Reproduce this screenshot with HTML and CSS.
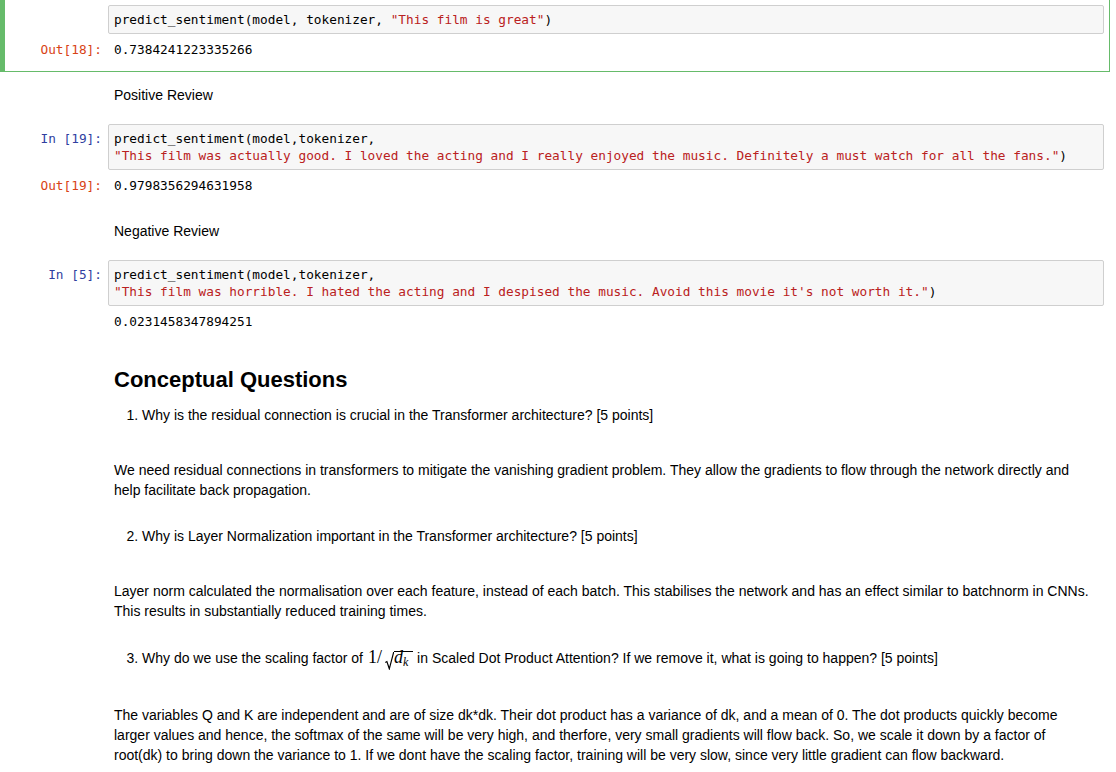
FILE: index.html
```html
<!DOCTYPE html>
<html>
<head>
<meta charset="utf-8">
<title>Notebook</title>
<link rel="stylesheet" href="styles.css">
</head>
<body>
<div class="notebook">

  <div class="cell code selected">
    <div class="row">
      <div class="prompt in"></div>
      <div class="input-area"><span class="cm-v">predict_sentiment(model, tokenizer, </span><span class="cm-s">"This film is great"</span><span class="cm-v">)</span></div>
    </div>
    <div class="row">
      <div class="prompt out">Out[18]:</div>
      <div class="output-text">0.7384241223335266</div>
    </div>
  </div>

  <div class="cell text">
    <div class="row">
      <div class="prompt"></div>
      <div class="rendered"><p>Positive Review</p></div>
    </div>
  </div>

  <div class="cell code">
    <div class="row">
      <div class="prompt in">In [19]:</div>
      <div class="input-area"><span class="cm-v">predict_sentiment(model,tokenizer,</span>
<span class="cm-s">"This film was actually good. I loved the acting and I really enjoyed the music. Definitely a must watch for all the fans."</span><span class="cm-v">)</span></div>
    </div>
    <div class="row">
      <div class="prompt out">Out[19]:</div>
      <div class="output-text">0.9798356294631958</div>
    </div>
  </div>

  <div class="cell text">
    <div class="row">
      <div class="prompt"></div>
      <div class="rendered"><p>Negative Review</p></div>
    </div>
  </div>

  <div class="cell code">
    <div class="row">
      <div class="prompt in">In [5]:</div>
      <div class="input-area"><span class="cm-v">predict_sentiment(model,tokenizer,</span>
<span class="cm-s">"This film was horrible. I hated the acting and I despised the music. Avoid this movie it's not worth it."</span><span class="cm-v">)</span></div>
    </div>
    <div class="row">
      <div class="prompt out"></div>
      <div class="output-text">0.0231458347894251</div>
    </div>
  </div>

  <div class="cell text">
    <div class="row">
      <div class="prompt"></div>
      <div class="rendered">
        <h2>Conceptual Questions</h2>
        <ol class="after-heading">
          <li>Why is the residual connection is crucial in the Transformer architecture? [5 points]</li>
        </ol>
      </div>
    </div>
  </div>

  <div class="cell text">
    <div class="row">
      <div class="prompt"></div>
      <div class="rendered"><p>We need residual connections in transformers to mitigate the vanishing gradient problem. They allow the gradients to flow through the network directly and help facilitate back propagation.</p></div>
    </div>
  </div>

  <div class="cell text">
    <div class="row">
      <div class="prompt"></div>
      <div class="rendered">
        <ol start="2">
          <li>Why is Layer Normalization important in the Transformer architecture? [5 points]</li>
        </ol>
      </div>
    </div>
  </div>

  <div class="cell text">
    <div class="row">
      <div class="prompt"></div>
      <div class="rendered"><p>Layer norm calculated the normalisation over each feature, instead of each batch. This stabilises the network and has an effect similar to batchnorm in CNNs. This results in substantially reduced training times.</p></div>
    </div>
  </div>

  <div class="cell text">
    <div class="row">
      <div class="prompt"></div>
      <div class="rendered">
        <ol start="3">
          <li>Why do we use the scaling factor of <span class="math"><span class="mn">1</span><span class="mo">/</span><svg class="radical" width="9" height="18" viewBox="0 0 9 18"><path d="M0.3 10.6 L1.9 9.6 L4.3 16.8 L8.6 0.5 L9 0.5" fill="none" stroke="#000" stroke-width="1.2" stroke-linejoin="miter"/></svg><span class="radicand"><span class="mi">d</span><span class="msub">k</span></span></span> in Scaled Dot Product Attention? If we remove it, what is going to happen? [5 points]</li>
        </ol>
      </div>
    </div>
  </div>

  <div class="cell text">
    <div class="row">
      <div class="prompt"></div>
      <div class="rendered"><p>The variables Q and K are independent and are of size dk*dk. Their dot product has a variance of dk, and a mean of 0. The dot products quickly become larger values and hence, the softmax of the same will be very high, and therfore, very small gradients will flow back. So, we scale it down by a factor of root(dk) to bring down the variance to 1. If we dont have the scaling factor, training will be very slow, since very little gradient can flow backward.</p></div>
    </div>
  </div>

</div>
</body>
</html>
```

FILE: styles.css
```css
html, body {
  margin: 0;
  padding: 0;
  background: #ffffff;
}

body {
  font-family: "Liberation Sans", Arial, Helvetica, sans-serif;
  font-size: 14px;
  line-height: 20px;
  color: #000000;
  overflow: hidden;
}

.notebook {
  width: 1110px;
}

.cell {
  border: 1px solid transparent;
  padding: 5px;
}

.cell.selected {
  border-color: #66bb6a;
  border-left-width: 5px;
  padding-left: 1px;
  margin-top: -1px;
}

.row {
  display: flex;
  align-items: flex-start;
}

.prompt {
  flex: none;
  width: 102px;
  box-sizing: border-box;
  padding-right: 6px;
  text-align: right;
  font-family: "DejaVu Sans Mono", "Liberation Mono", monospace;
  font-size: 12.77px;
  line-height: 17px;
  white-space: pre;
}

.prompt.in {
  color: #303f9f;
  padding-top: 6px;
}

.prompt.out {
  color: #d84315;
  padding-top: 7px;
}

.input-area {
  flex: 1;
  min-width: 0;
  background: #f7f7f7;
  border: 1px solid #cfcfcf;
  border-radius: 2px;
  padding: 5px 5px;
  font-family: "DejaVu Sans Mono", "Liberation Mono", monospace;
  font-size: 12.77px;
  line-height: 17px;
  white-space: pre;
  color: #000000;
}

.cm-v {
  color: #000000;
}

.cm-s {
  color: #ba2121;
}

.output-text {
  flex: 1;
  padding: 7px 0 8px 6px;
  font-family: "DejaVu Sans Mono", "Liberation Mono", monospace;
  font-size: 12.77px;
  line-height: 17px;
  white-space: pre;
  color: #000000;
}

.rendered {
  flex: 1;
  min-width: 0;
  padding: 7px 7px 7px 6px;
}

.rendered p {
  margin: 0;
}

.rendered h2 {
  margin: 11px 0 0;
  font-size: 22px;
  line-height: 24px;
  font-weight: bold;
}

.rendered ol {
  margin: 0 0 9px;
  padding-left: 28px;
}

.rendered ol.after-heading {
  margin-top: 13px;
}

.math {
  font-family: "Liberation Serif", "Times New Roman", serif;
  font-size: 18px;
  white-space: nowrap;
  padding-left: 1px;
}

.math .mo {
  margin-right: 3px;
}

.radical {
  vertical-align: -7px;
}

.radicand {
  display: inline-block;
  border-top: 1px solid #000;
  line-height: 10px;
  padding-right: 5px;
}

.radicand .mi {
  font-style: italic;
}

.radicand .msub {
  font-style: italic;
  font-size: 12px;
  line-height: 0;
  vertical-align: -3px;
}
```
